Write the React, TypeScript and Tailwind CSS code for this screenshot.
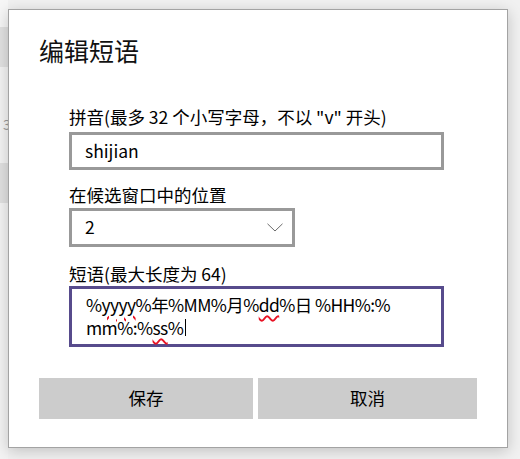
import React from "react";

const font = { fontFamily: '"Noto Sans CJK SC", "Liberation Sans", sans-serif' };

const Squiggle = ({ children }: { children: React.ReactNode }) => (
  <span className="underline decoration-wavy decoration-[#e81123] decoration-[1.5px] underline-offset-[3px]">
    {children}
  </span>
);

const BackWindow = () => (
  <div className="flex w-[8px] shrink-0 flex-col">
    <div className="h-[27px] bg-[#f6f6f6]" />
    <div className="h-[40px] bg-[#e1e1e1]" />
    <div className="h-[96px] bg-[#f3f3f3] pt-[50px] pl-[3px] text-[14px] leading-[14px] text-[#9a9a9a]">
      3
    </div>
    <div className="h-[40px] bg-[#e0e0e0]" />
    <div className="flex-1 bg-[#f3f3f3]" />
  </div>
);

export default function App() {
  return (
    <div
      className="flex h-[459px] w-[520px] overflow-hidden bg-[#f1f1f1] text-black"
      style={font}
    >
      <BackWindow />
      <div className="mt-[9px] h-[439px] w-[500px] shrink-0 border border-[#a3a3a3] bg-white pt-[24px] pl-[30px] shadow-[0_3px_14px_rgba(0,0,0,0.2)]">
        <h1 className="text-[25px] leading-[32px] text-[#111111]">编辑短语</h1>

        <div className="mt-[40px] ml-[30px] text-[17.5px]">
          <div className="leading-[22px]">拼音(最多 32 个小写字母，不以 "v" 开头)</div>
          <div className="mt-[4px] flex h-[38px] w-[375px] items-center border-[3px] border-[#999999] pl-[13px]">
            shijian
          </div>

          <div className="mt-[14px] leading-[22px]">在候选窗口中的位置</div>
          <div className="mt-[2px] flex h-[39px] w-[226px] items-center justify-between border-[3px] border-[#999999] pr-[9px] pl-[13px]">
            <span>2</span>
            <svg width="16" height="9" viewBox="0 0 16 9" fill="none">
              <path d="M0.5 0.8 L8 8 L15.5 0.8" stroke="#6b6b6b" strokeWidth="1" />
            </svg>
          </div>

          <div className="mt-[16px] leading-[22px]">短语(最大长度为 64)</div>
          <div className="mt-[1px] h-[61px] w-[375px] border-[3px] border-[#574b8c] pt-[4px] pl-[14px] leading-[23px] tracking-[-0.6px]">
            <div>
              %<Squiggle>yyyy</Squiggle>%年%MM%月%<Squiggle>dd</Squiggle>%日 %HH%:%
            </div>
            <div className="flex items-center">
              <span>
                mm%:%<Squiggle>ss</Squiggle>%
              </span>
              <span className="ml-[2px] inline-block h-[17px] w-px bg-black" />
            </div>
          </div>
        </div>

        <div className="mt-[31px] flex gap-[5px] text-[17.5px]">
          <button className="h-[41px] w-[214px] bg-[#cccccc] text-black">保存</button>
          <button className="h-[41px] w-[219px] bg-[#cccccc] text-black">取消</button>
        </div>
      </div>
    </div>
  );
}
